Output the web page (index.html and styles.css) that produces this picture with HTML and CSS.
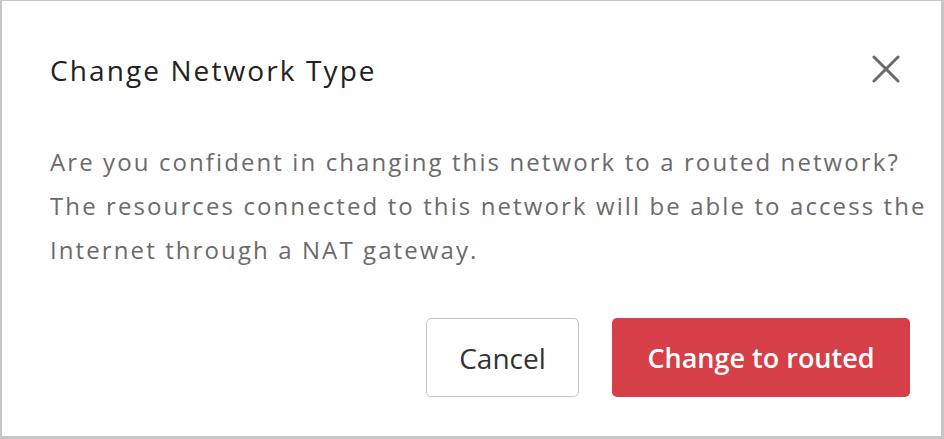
FILE: index.html
```html
<!DOCTYPE html>
<html>
<head>
<meta charset="utf-8">
<link rel="stylesheet" href="styles.css">
</head>
<body>
<div class="dialog">
  <div class="header">
    <h2 class="title">Change Network Type</h2>
    <button class="close" aria-label="Close">
      <svg width="28" height="28" viewBox="0 0 28 28"><path d="M2 2 L26 26 M26 2 L2 26" stroke="#6a6a6a" stroke-width="3" stroke-linecap="round"/></svg>
    </button>
  </div>
  <p class="message">Are you confident in changing this network to a routed network? The resources connected to this network will be able to access the Internet through a NAT gateway.</p>
  <div class="actions">
    <button class="btn btn-cancel">Cancel</button>
    <button class="btn btn-primary">Change to routed</button>
  </div>
</div>
</body>
</html>
```
FILE: styles.css
```css
html, body {
  margin: 0;
  padding: 0;
  background: #fff;
}
.dialog {
  width: 944px;
  height: 439px;
  box-sizing: border-box;
  border-style: solid;
  border-color: #c6c6c6;
  border-width: 1px 3px 3px 2px;
  font-family: "Open Sans", "Noto Sans", sans-serif;
  padding: 0 31px 0 48px;
  display: flex;
  flex-direction: column;
}
.header {
  display: flex;
  justify-content: space-between;
  align-items: flex-start;
  height: 140px;
}
.title {
  margin: 49px 0 0 0;
  font-size: 28px;
  font-weight: 400;
  letter-spacing: 2.1px;
  color: #222;
  line-height: 40px;
}
.close {
  background: none;
  border: 0;
  padding: 0;
  width: 28px;
  height: 28px;
  display: flex;
  margin-top: 54px;
  margin-right: 10px;
  cursor: pointer;
}
.message {
  margin: -1px -24px 0 0;
  font-size: 24px;
  letter-spacing: 2.1px;
  line-height: 44px;
  color: #6b6b6b;
}
.actions {
  display: flex;
  justify-content: flex-end;
  gap: 33px;
  margin-top: 46px;
}
.btn {
  height: 79px;
  font-family: "Open Sans", "Noto Sans", sans-serif;
  font-size: 28px;
  border-radius: 5px;
  cursor: pointer;
}
.btn-cancel {
  width: 153px;
  background: #fff;
  border: 1px solid #c4c4c4;
  color: #333;
}
.btn-primary {
  width: 298px;
  background: #d63f48;
  border: 0;
  color: #fff;
  font-size: 27px;
  font-weight: 600;
}
```
